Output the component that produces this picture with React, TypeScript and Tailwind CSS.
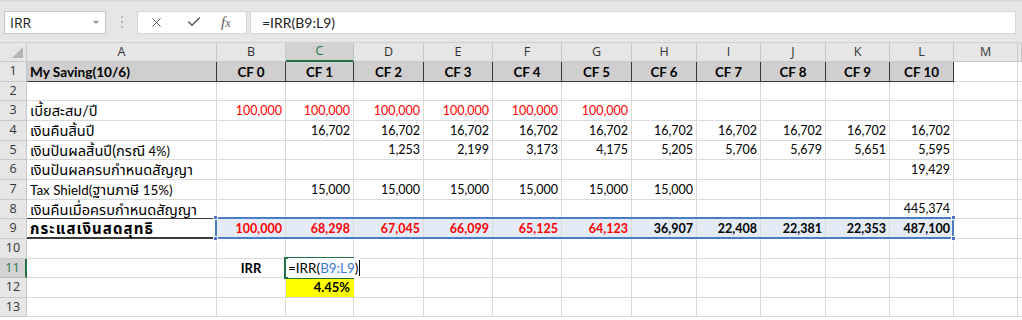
import React from "react";
import { X, Check } from "lucide-react";

type C = { t?: React.ReactNode; cls?: string; bd?: string };

const GRID = "border-r-[#dadada] border-b-[#dadada]";
const HDR = "border-r-[#3a3a3a] border-b-[#3a3a3a]";

const red = "justify-end text-[#ff0000]";
const num = "justify-end text-black";
const redB = "justify-end text-[#ff0000] font-bold bg-[#e4ebf7]";
const blkB = "justify-end text-black font-bold bg-[#e4ebf7]";

const e = (): C => ({});

const Th = ({ children }: { children: React.ReactNode }) => <span className="text-[14.6px]">{children}</span>;

const cols = ["A", "B", "C", "D", "E", "F", "G", "H", "I", "J", "K", "L", "M", ""];

const rows: C[][] = [
  [
    { t: "My Saving(10/6)", cls: "font-bold bg-[#d0cece] text-[13.6px]", bd: HDR },
    ...Array.from({ length: 11 }, (_, i) => ({ t: `CF ${i}`, cls: "font-bold bg-[#d0cece] justify-center text-[13.4px]", bd: HDR })),
    e(),
  ],
  Array.from({ length: 13 }, e),
  [
    { t: <Th>เบี้ยสะสม/ปี</Th> },
    ...Array.from({ length: 6 }, () => ({ t: "100,000", cls: red })),
    ...Array.from({ length: 6 }, e),
  ],
  [
    { t: <Th>เงินคืนสิ้นปี</Th> },
    e(),
    ...Array.from({ length: 10 }, () => ({ t: "16,702", cls: num })),
    e(),
  ],
  [
    { t: <><Th>เงินปันผลสิ้นปี(กรณี</Th><span className="text-[13px]">{" 4%)"}</span></> },
    e(),
    e(),
    ...["1,253", "2,199", "3,173", "4,175", "5,205", "5,706", "5,679", "5,651", "5,595"].map((t) => ({ t, cls: num })),
    e(),
  ],
  [
    { t: <Th>เงินปันผลครบกำหนดสัญญา</Th> },
    ...Array.from({ length: 10 }, e),
    { t: "19,429", cls: num },
    e(),
  ],
  [
    { t: <><span className="text-[13.4px]">Tax Shield(</span><Th>ฐานภาษี</Th><span className="text-[13.4px]">{" 15%)"}</span></> },
    e(),
    ...Array.from({ length: 6 }, () => ({ t: "15,000", cls: num })),
    ...Array.from({ length: 5 }, e),
  ],
  [
    { t: <Th>เงินคืนเมื่อครบกำหนดสัญญา</Th>, bd: "border-r-[#dadada] border-b-[#3a3a3a]" },
    ...Array.from({ length: 10 }, e),
    { t: "445,374", cls: num },
    e(),
  ],
  [
    {
      t: <span className="text-[15px] tracking-[1.1px]">กระแสเงินสดสุทธิ</span>,
      cls: "font-bold border-b-2",
      bd: "border-r-[#3a3a3a] border-b-[#3a3a3a]",
    },
    ...["100,000", "68,298", "67,045", "66,099", "65,125", "64,123"].map((t) => ({ t, cls: redB })),
    ...["36,907", "22,408", "22,381", "22,353", "487,100"].map((t) => ({ t, cls: blkB })),
    e(),
  ],
  Array.from({ length: 13 }, e),
  [
    e(),
    { t: "IRR", cls: "font-bold justify-center text-[13px]" },
    { t: "", cls: "" },
    ...Array.from({ length: 10 }, e),
  ],
  [
    e(),
    e(),
    { t: "4.45%", cls: "font-bold justify-end bg-[#ffff00] text-[13px]", bd: "border-r-[#ffff00] border-b-[#dadada]" },
    ...Array.from({ length: 10 }, e),
  ],
  Array.from({ length: 13 }, e),
];

function Handle({ pos }: { pos: string }) {
  return <div className={`absolute w-[5px] h-[5px] bg-[#4472c4] border border-white ${pos}`} />;
}

const hdrCell =
  "bg-[#e6e6e6] border-r border-b border-r-[#c8c8c8] border-b-[#c8c8c8] flex items-center justify-center text-[#333] text-[12.5px] font-['Open_Sans',sans-serif]";

export default function App() {
  return (
    <div className="w-[1022px] h-[320px] overflow-hidden bg-white font-['Lato','Noto_Sans_Thai','Noto_Sans',sans-serif] text-[12.5px] text-black">
      {/* Formula bar */}
      <div className="h-[43px] bg-[#e6e6e6] border-t-2 border-t-[#dcdcdc] border-b border-b-[#d0d0d0] flex items-center pl-[4px] pr-[6px]">
        <div className="w-[102px] h-[23px] bg-white border border-[#c6c6c6] flex items-center justify-between pl-[5px] pr-[6px] text-[14px] text-[#222] font-['Open_Sans',sans-serif]">
          <span>IRR</span>
          <span className="w-0 h-0 border-l-[3px] border-r-[3px] border-t-[3px] border-l-transparent border-r-transparent border-t-[#8a8a8a]" />
        </div>
        <div className="w-[31px] flex flex-col items-center gap-[3px]">
          <span className="w-[2px] h-[2px] bg-[#b5b5b5]" />
          <span className="w-[2px] h-[2px] bg-[#b5b5b5]" />
          <span className="w-[2px] h-[2px] bg-[#b5b5b5]" />
        </div>
        <div className="w-[110px] h-[23px] bg-white border border-[#d6d6d6] flex items-center pl-[11px] text-[#5a5a5a]">
          <X size={15} strokeWidth={1.6} />
          <Check size={16} strokeWidth={2.2} className="ml-[22px]" />
          <span className="ml-[19px] font-['Liberation_Serif',serif] italic text-[15px] leading-none">
            f<span className="text-[12px]">x</span>
          </span>
        </div>
        <div className="flex-1 ml-[3px] h-[23px] bg-white border border-[#d6d6d6] flex items-center pl-[11px] text-[14px] text-[#222] font-['Lato',sans-serif]">
          =IRR(B9:L9)
        </div>
      </div>

      {/* Grid */}
      <div className="grid grid-cols-[27px_190px_69px_68px_70px_69px_69px_70px_65px_64px_65px_64px_64px_64px_1fr] grid-rows-[19px_20px_19px_20px_20px_19px_20px_20px_19px_20px_20px_19px_20px_19px]">
        {/* corner */}
        <div className="relative bg-[#e6e6e6] border-r border-b border-r-[#c8c8c8] border-b-[#c8c8c8]">
          <svg className="absolute right-[3px] bottom-[3px]" width="11" height="11" viewBox="0 0 11 11">
            <polygon points="11,0 11,11 0,11" fill="#b4b4b4" />
          </svg>
        </div>
        {cols.map((c, i) =>
          c === "C" ? (
            <div
              key={c}
              className="bg-[#d2d2d2] border-r border-r-[#bdbdbd] border-b-2 border-b-[#217346] flex items-center justify-center text-[#217346] text-[12.5px] font-['Open_Sans',sans-serif]"
            >
              {c}
            </div>
          ) : (
            <div key={i} className={hdrCell}>
              {c}
            </div>
          )
        )}
        {rows.map((row, ri) => {
          const rn = ri + 1;
          return (
            <React.Fragment key={ri}>
              {rn === 11 ? (
                <div className="bg-[#d2d2d2] border-r-2 border-r-[#217346] border-b border-b-[#bdbdbd] flex items-center justify-center text-[#217346] text-[12.5px] font-['Open_Sans',sans-serif]">
                  {rn}
                </div>
              ) : (
                <div className={hdrCell}>{rn}</div>
              )}
              {row.map((cell, ci) => (
                <div
                  key={ci}
                  className={`relative flex items-center px-[3px] pt-[1px] whitespace-nowrap border-r border-b ${cell.bd ?? GRID} ${cell.cls ?? ""}`}
                >
                  <span className="whitespace-pre">{cell.t}</span>
                  {rn === 9 && ci === 1 && (
                    <div className="absolute z-10 -left-[2px] -top-[2px] w-[739px] h-[22px] border-2 border-[#4a7ebf] pointer-events-none">
                      <Handle pos="-left-[4px] -top-[4px]" />
                      <Handle pos="-right-[4px] -top-[4px]" />
                      <Handle pos="-left-[4px] -bottom-[4px]" />
                      <Handle pos="-right-[4px] -bottom-[4px]" />
                    </div>
                  )}
                  {rn === 11 && ci === 2 && (
                    <div className="absolute z-10 -left-[2px] -top-[2px] w-[70px] h-[22px] border-2 border-[#217346] flex items-center pl-[2px] overflow-visible">
                      <span className="bg-white pr-[1px] whitespace-nowrap text-[13.5px]">
                        =IRR(<span className="text-[#3e7bd0]">B9:L9</span>)
                      </span>
                      <span className="shrink-0 w-[1px] h-[16px] bg-black" />
                    </div>
                  )}
                </div>
              ))}
              <div className="border-b border-b-[#dadada]" />
            </React.Fragment>
          );
        })}
      </div>
    </div>
  );
}
